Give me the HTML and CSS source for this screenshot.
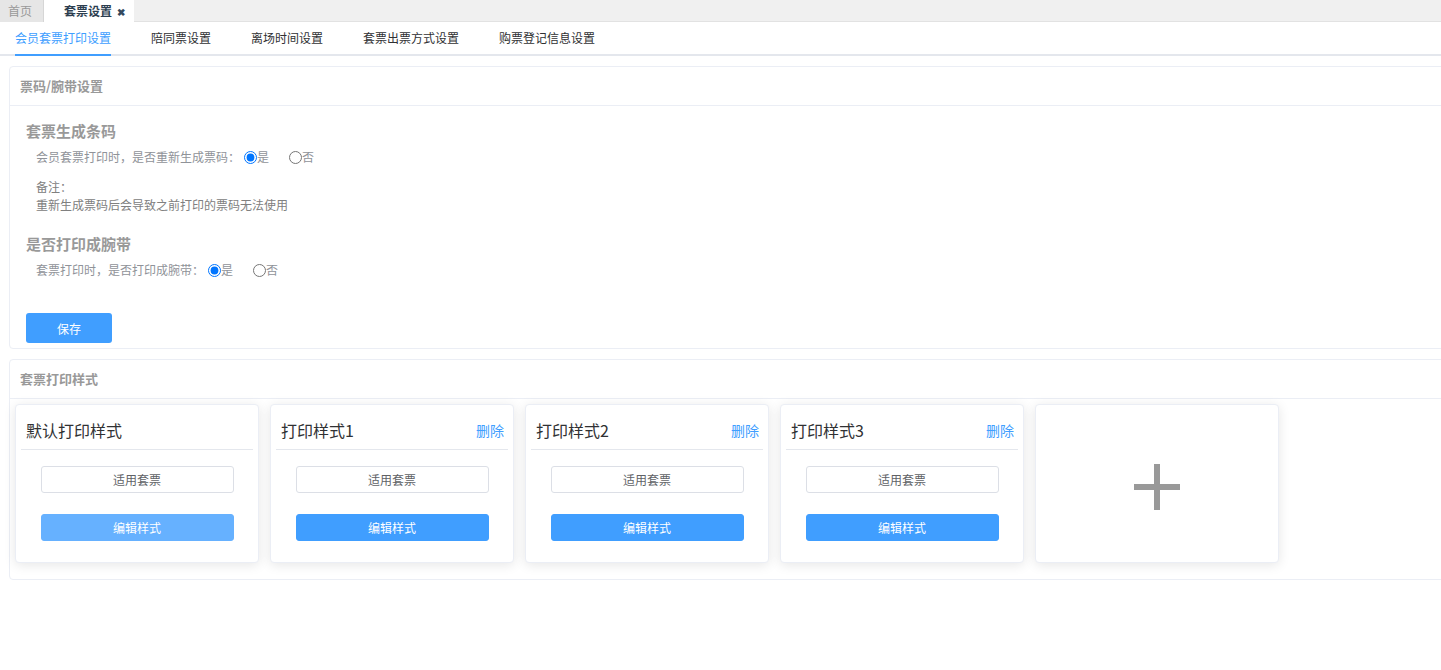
FILE: index.html
```html
<!DOCTYPE html>
<html lang="zh-CN">
<head>
<meta charset="utf-8">
<title>套票设置</title>
<link rel="stylesheet" href="styles.css">
</head>
<body>
<div class="topbar">
  <div class="ttab home">首页</div>
  <div class="ttab active">套票设置 <span class="close">✖</span></div>
</div>
<div class="subtabs">
  <div class="stab on">会员套票打印设置</div>
  <div class="stab">陪同票设置</div>
  <div class="stab">离场时间设置</div>
  <div class="stab">套票出票方式设置</div>
  <div class="stab">购票登记信息设置</div>
</div>
<div class="content">
  <section class="panel">
    <div class="panel-head">票码/腕带设置</div>
    <div class="panel-body form">
      <h4 class="sec-title">套票生成条码</h4>
      <div class="row">会员套票打印时，是否重新生成票码：<label class="opt"><input type="radio" name="a" checked>是</label><label class="opt"><input type="radio" name="a">否</label></div>
      <div class="note">备注：<br>重新生成票码后会导致之前打印的票码无法使用</div>
      <h4 class="sec-title second">是否打印成腕带</h4>
      <div class="row">套票打印时，是否打印成腕带：<label class="opt"><input type="radio" name="b" checked>是</label><label class="opt"><input type="radio" name="b">否</label></div>
      <button class="btn-save">保存</button>
    </div>
  </section>
  <section class="panel second-panel">
    <div class="panel-head">套票打印样式</div>
    <div class="panel-body styles">
      <div class="scard">
        <div class="scard-head"><span>默认打印样式</span></div>
        <button class="btn-plain">适用套票</button>
        <button class="btn-primary light">编辑样式</button>
      </div>
      <div class="scard">
        <div class="scard-head"><span>打印样式1</span><a class="del">删除</a></div>
        <button class="btn-plain">适用套票</button>
        <button class="btn-primary">编辑样式</button>
      </div>
      <div class="scard">
        <div class="scard-head"><span>打印样式2</span><a class="del">删除</a></div>
        <button class="btn-plain">适用套票</button>
        <button class="btn-primary">编辑样式</button>
      </div>
      <div class="scard">
        <div class="scard-head"><span>打印样式3</span><a class="del">删除</a></div>
        <button class="btn-plain">适用套票</button>
        <button class="btn-primary">编辑样式</button>
      </div>
      <div class="scard add">
        <div class="plus"></div>
      </div>
    </div>
  </section>
</div>
</body>
</html>
```
FILE: styles.css
```css
html, body {
  margin: 0;
  padding: 0;
  background: #fff;
  overflow: hidden;
}
body {
  font-family: "Noto Sans CJK SC", "Noto Sans", "Liberation Sans", sans-serif;
  font-size: 12px;
  color: #606266;
}
.topbar {
  height: 22px;
  background: #f0f0f0;
  display: flex;
  border-bottom: 1px solid #e2e2e2;
  box-sizing: border-box;
}
.ttab {
  height: 22px;
  line-height: 22px;
  font-size: 12px;
  box-sizing: border-box;
}
.ttab.home {
  width: 44px;
  background: #e6e6e6;
  color: #999;
  padding-left: 8px;
  border-right: 1px solid #d6d6d6;
}
.ttab.active {
  width: 90px;
  background: #fff;
  color: #2c3e50;
  font-weight: bold;
  padding-left: 20px;
}
.close {
  font-size: 10px;
  margin-left: 2px;
  color: #34495e;
}
.subtabs {
  display: flex;
  height: 34px;
  padding-left: 15px;
  border-bottom: 2px solid #e4e7ed;
  box-sizing: border-box;
}
.stab {
  font-size: 12px;
  color: #303133;
  line-height: 32px;
  margin: 0 20px -2px;
  border-bottom: 2px solid transparent;
}
.stab:first-child { margin-left: 0; }
.stab.on {
  color: #409eff;
  border-bottom-color: #409eff;
}
.content {
  padding: 10px 0 0 9px;
  width: 1460px;
}
.panel {
  border: 1px solid #ebeef5;
  border-radius: 4px;
  background: #fff;
}
.second-panel { margin-top: 10px; }
.panel-head {
  height: 38px;
  line-height: 38px;
  padding: 0 10px;
  border-bottom: 1px solid #ebeef5;
  font-size: 13px;
  font-weight: bold;
  color: #999;
}
.form {
  padding: 15px 16px 5px;
}
.sec-title {
  margin: 0;
  font-size: 15px;
  line-height: 20px;
  font-weight: bold;
  color: #999;
}
.sec-title.second { margin-top: 20px; }
.row {
  margin-top: 6px;
  padding-left: 10px;
  line-height: 20px;
  color: #909399;
  display: flex;
  align-items: center;
}
.opt {
  display: inline-flex;
  align-items: center;
  margin-right: 16px;
  color: #909399;
}
.opt input {
  margin: 0 0 0 4px;
  width: 13px;
  height: 13px;
}
.note {
  margin-top: 11px;
  padding-left: 10px;
  line-height: 18px;
  color: #808080;
}
.btn-save {
  display: block;
  margin-top: 33px;
  width: 86px;
  height: 30px;
  border: 0;
  border-radius: 3px;
  background: #409eff;
  color: #fff;
  font-family: inherit;
  font-size: 12px;
  padding: 0;
}
.styles {
  display: flex;
  gap: 11px;
  padding: 5px 5px 16px;
}
.scard {
  width: 244px;
  height: 159px;
  box-sizing: border-box;
  border: 1px solid #ebeef5;
  border-radius: 4px;
  box-shadow: 0 2px 12px 0 rgba(0, 0, 0, 0.1);
  padding: 0 5px;
  display: flex;
  flex-direction: column;
  align-items: center;
  background: #fff;
}
.scard-head {
  align-self: stretch;
  display: flex;
  justify-content: space-between;
  align-items: center;
  padding: 14px 4px 8px 5px;
  line-height: 22px;
  border-bottom: 1px solid #e4e7ed;
}
.scard-head span {
  font-size: 16px;
  color: #303133;
}
.del {
  font-size: 14px;
  color: #409eff;
  cursor: pointer;
}
.btn-plain, .btn-primary {
  width: 193px;
  height: 27px;
  box-sizing: border-box;
  border-radius: 3px;
  font-family: inherit;
  font-size: 12px;
  padding: 0;
}
.btn-plain {
  margin-top: 16px;
  background: #fff;
  border: 1px solid #dcdfe6;
  color: #606266;
}
.btn-primary {
  margin-top: 21px;
  background: #409eff;
  border: 1px solid #409eff;
  color: #fff;
}
.btn-primary.light {
  background: #66b1ff;
  border-color: #66b1ff;
}
.scard.add {
  justify-content: center;
  padding-top: 6px;
}
.plus {
  position: relative;
  width: 46px;
  height: 46px;
}
.plus::before, .plus::after {
  content: "";
  position: absolute;
  background: #999;
}
.plus::before {
  left: 0;
  right: 0;
  top: 20px;
  height: 6px;
}
.plus::after {
  top: 0;
  bottom: 0;
  left: 20px;
  width: 6px;
}
```
